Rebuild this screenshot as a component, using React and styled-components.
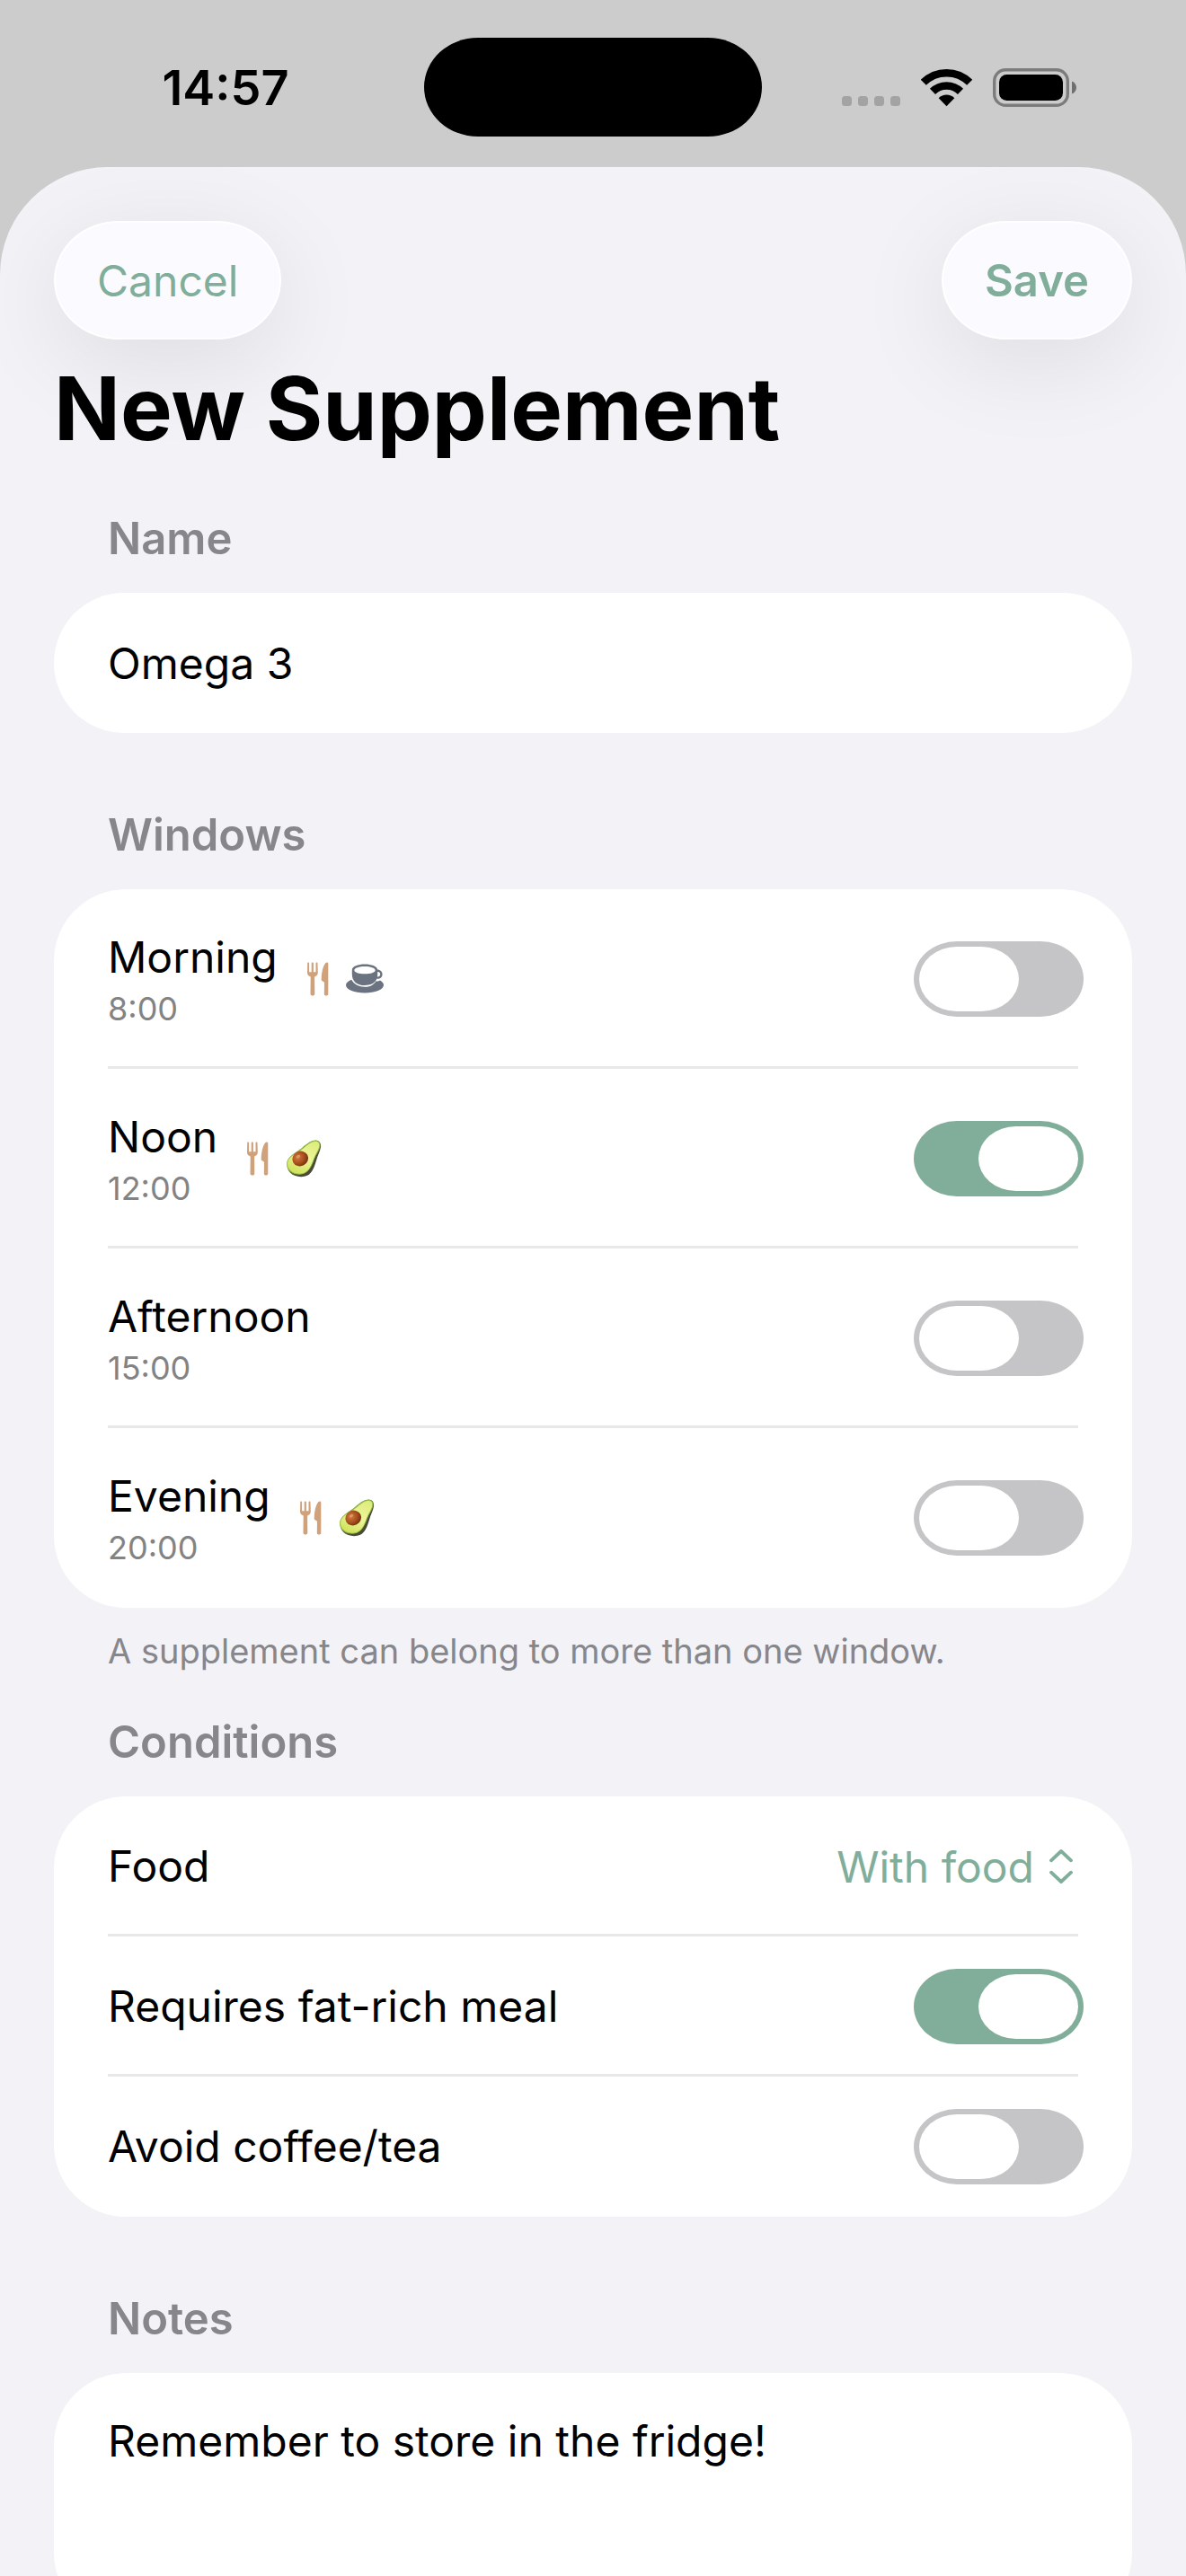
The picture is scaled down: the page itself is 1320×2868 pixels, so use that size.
import React, { useState } from "react";
import styled, { createGlobalStyle } from "styled-components";

const GlobalStyle = createGlobalStyle`
  * {
    box-sizing: border-box;
  }

  body {
    margin: 0;
    background: #cccccc;
    font-family: Inter, "Liberation Sans", sans-serif;
    color: #000000;
  }

  button, input, select, textarea {
    font: inherit;
    color: inherit;
  }
`;

const dayWindows = [
    { id: "morning", title: "Morning", time: "8:00", icons: ["cutlery", "coffee"] },
    { id: "noon", title: "Noon", time: "12:00", icons: ["cutlery", "avocado"] },
    { id: "afternoon", title: "Afternoon", time: "15:00", icons: [] },
    { id: "evening", title: "Evening", time: "20:00", icons: ["cutlery", "avocado"] },
];

const foodOptions = ["With food", "No food", "Any time"];

const Screen = styled.div`
  display: flex;
  flex-direction: column;
  height: 100vh;
  overflow: hidden;
`;

const StatusBar = styled.header`
  display: grid;
  grid-template-columns: 1fr 376px 1fr;
  align-items: center;
  flex-shrink: 0;
  height: 186px;
  padding-top: 8px;
`;

const Clock = styled.time`
  padding-left: 30px;
  font-size: 54px;
  font-weight: 600;
  text-align: center;
`;

const Island = styled.div`
  height: 110px;
  border-radius: 60px / 55px;
  background: #000000;
`;

const StatusIcons = styled.div`
  display: flex;
  align-items: center;
  justify-content: flex-end;
  gap: 23px;
  padding-right: 121px;
`;

const Sheet = styled.main`
  flex: 1;
  min-height: 0;
  padding: 60px 60px 0;
  border-radius: 120px 120px 0 0;
  background: #f2f2f7;
  overflow: hidden;
`;

const Toolbar = styled.div`
  display: flex;
  justify-content: space-between;
`;

const ToolbarButton = styled.button`
  height: 132px;
  padding: 0 46px;
  border: 2px solid #ffffff;
  border-radius: 72px / 66px;
  background: #fbfbff;
  box-shadow: 0 24px 108px rgba(0, 0, 0, 0.09);
  color: #81ae9a;
  font-size: ${({ $bold }) => ($bold ? 49 : 48)}px;
  font-weight: ${({ $bold }) => ($bold ? 600 : 400)};
  cursor: pointer;
`;

const Title = styled.h1`
  margin: 17px 0 0;
  font-size: 97px;
  font-weight: 700;
  line-height: 120px;
`;

const Section = styled.section`
  margin-top: ${({ $gap }) => $gap}px;
`;

const SectionTitle = styled.h2`
  margin: 0 60px 30px;
  color: #86868b;
  font-size: 49px;
  font-weight: 600;
  line-height: 60px;
`;

const Card = styled.div`
  padding: 0 60px;
  border-radius: 80px;
  background: #ffffff;
`;

const Row = styled.div`
  display: flex;
  align-items: center;
  height: ${({ $tall }) => ($tall ? 200 : 156)}px;
  font-size: 48px;
  /* the divider is painted inside the row so it does not shift the content */
  box-shadow: inset 0 -3px 0 #e8e8e8;

  &:last-child {
    box-shadow: none;
  }
`;

const RowLabel = styled.label`
  flex: 1;
  line-height: 60px;
`;

const WindowInfo = styled.div`
  flex: 1;
  display: flex;
  align-items: center;
  gap: 33px;
`;

const WindowLabel = styled.label`
  display: flex;
  flex-direction: column;
  gap: 6px;
  line-height: 60px;
`;

const WindowTime = styled.span`
  color: #838383;
  font-size: 36px;
  line-height: 42px;
`;

const IconGroup = styled.span`
  display: flex;
  align-items: center;
  gap: 19px;
`;

const Switch = styled.input`
  appearance: none;
  display: flex;
  flex-shrink: 0;
  justify-content: ${({ checked }) => (checked ? "flex-end" : "flex-start")};
  width: 189px;
  height: 84px;
  margin: 0 -6px 0 0;
  padding: 6px;
  border-radius: 48px / 42px;
  background: ${({ checked }) => (checked ? "#81ae9a" : "#c5c5c7")};
  cursor: pointer;

  &::before {
    content: "";
    width: 111px;
    height: 72px;
    border-radius: 42px / 36px;
    background: #ffffff;
  }
`;

const NameInput = styled.input`
  width: 100%;
  height: 156px;
  padding: 0;
  border: none;
  outline: none;
  background: transparent;
  font-size: 48px;
`;

const NotesInput = styled.textarea`
  display: block;
  width: 100%;
  height: 280px;
  padding: 46px 0;
  border: none;
  outline: none;
  resize: none;
  background: transparent;
  font-size: 48px;
  line-height: 60px;
`;

const SelectWrapper = styled.div`
  display: flex;
  align-items: center;
  gap: 17px;
  padding-right: 6px;
  color: #81ae9a;
`;

const FoodSelect = styled.select`
  appearance: none;
  padding: 0;
  border: none;
  outline: none;
  background: transparent;
  text-align: right;
  text-align-last: right;
  cursor: pointer;
`;

const Footnote = styled.p`
  margin: 24px 60px 0;
  color: #86868b;
  font-size: 38px;
  line-height: 48px;
`;

const SignalIcon = () => (
    <svg width="65" height="43" viewBox="0 0 65 43" fill="#a3a3a3">
        {[0, 18, 36, 54].map((x) => (
            <rect key={x} x={x} y="31" width="11" height="11" rx="3.5" />
        ))}
    </svg>
);

const WifiIcon = () => (
    <svg width="57" height="43" viewBox="0 0 57 43">
        <g fill="none" stroke="#000" strokeWidth="8.6">
            <path d="M2.8 15.8A36.4 36.4 0 0 1 54.2 15.8" />
            <path d="M13 25.9A22 22 0 0 1 44 25.9" />
        </g>
        <path d="M28.5 42.2L19.7 33.2A12.6 12.6 0 0 1 37.3 33.2Z" />
    </svg>
);

const BatteryIcon = () => (
    <svg width="94" height="43" viewBox="0 0 94 43">
        <rect x="1.7" y="1.7" width="81.6" height="39.6" rx="12.5" fill="none" stroke="#7c7c7c" strokeWidth="3.4" />
        <rect x="7" y="7" width="71" height="29" rx="8.5" />
        <path d="M88 14.5C91 15.5 93 18.2 93 21.5S91 27.5 88 28.5Z" fill="#6f6f6f" />
    </svg>
);

const CutleryIcon = () => (
    <svg width="24" height="38" viewBox="0 0 24 38" fill="#cfa27c">
        <path d="M1.2 0.6C1.9 0.6 2.1 1 2.1 1.7V11.2H4.7V1.6C4.7 0.9 5 0.6 5.8 0.6S6.9 0.9 6.9 1.6V11.2H9.5V1.7C9.5 1 9.8 0.6 10.5 0.6S11.5 1 11.5 1.7L11.8 12.2C11.8 14.4 10 15.6 8.1 16.6L8.3 35.6C8.3 37 7.2 37.6 5.9 37.6S3.5 37 3.5 35.6L3.7 16.6C1.8 15.6 0 14.4 0 12.2L0.2 1.7C0.2 1 0.5 0.6 1.2 0.6Z" />
        <path d="M21.8 0.6C22.8 0.6 23.3 1.2 23.3 2.2V35.6C23.3 37 22.4 37.6 21 37.6S18.8 37 18.8 35.6L19 22.8L16.5 21.1C15.8 20.6 15.6 20.1 15.7 19.3C15.8 12 17.6 4 20.3 1.2C20.8 0.8 21.3 0.6 21.8 0.6Z" />
    </svg>
);

const CoffeeIcon = () => (
    <svg width="42" height="38" viewBox="0 0 42 38" fill="#6b7280">
        <path d="M6.2 19.8C2.4 21.3 0 23.4 0 25.8C0 30.8 9.6 34.4 21 34.4S42 30.8 42 25.8C42 23.8 40.6 21.9 38 20.5C36.7 21.4 35 21.6 33.6 21.2C31 25.5 26.5 27.8 21 27.8C14.6 27.8 9 25 6.2 19.8Z" />
        <path
            fillRule="evenodd"
            d="M21 2.6C28.4 2.6 34.8 4.9 35.1 8.4C38 8.3 40.6 10.6 40.6 13.7C40.6 17 37.8 19.2 34.3 18.8C32.3 23.6 27.4 26 21 26C12.3 26 6.8 21.6 6.8 13.4V8.9C6.8 5 13.5 2.6 21 2.6ZM21 5.1C14.5 5.1 9.4 6.8 9.4 9.3S14.5 13.3 21 13.3S32.6 11.8 32.6 9.3S27.5 5.1 21 5.1ZM35.2 11.1V14C35.2 14.9 35.1 15.6 34.9 16.5C36.8 16.6 38.2 15.6 38.2 13.7C38.2 12.1 37 11 35.2 11.1Z"
        />
    </svg>
);

const AvocadoIcon = () => (
    <svg width="40" height="42" viewBox="0 0 40 42">
        <defs>
            <linearGradient id="skin" x1="0" y1="0" x2="1" y2="1">
                <stop offset="0.35" stopColor="#7fa83a" />
                <stop offset="0.65" stopColor="#4a4a38" />
            </linearGradient>
            <linearGradient id="flesh" x1="0.8" y1="0" x2="0.3" y2="1">
                <stop offset="0" stopColor="#dcec7c" />
                <stop offset="0.5" stopColor="#eef598" />
                <stop offset="1" stopColor="#cfe25c" />
            </linearGradient>
            <radialGradient id="pit" cx="0.4" cy="0.35" r="0.7">
                <stop offset="0" stopColor="#d37a42" />
                <stop offset="0.55" stopColor="#a9521f" />
                <stop offset="1" stopColor="#6e2c0e" />
            </radialGradient>
        </defs>
        <path d="M33.6 0.6C37.4 0.8 39.6 3.8 39 8.2C38.2 13.2 35.6 17.4 34.2 22.4C32 30.2 29.4 37 24 39.8C18.4 42.4 9.5 41.2 5 36.8C1.4 33.2 0 27 2.6 22C6 16.4 12 13.6 17.4 9.4C22.6 5.2 27.6 0.4 33.6 0.6Z" fill="url(#skin)" />
        <path d="M33.6 1.4C37.2 1.5 38.6 4.8 37.4 8.6C36 13.2 33.4 16.2 31.4 21.4C28.8 28.4 26.4 34.4 20.4 37.2C14.4 39.4 7.2 37.6 3.8 33.2C0.8 28.8 0.8 25 3.6 21C7 16.4 13 14.2 18.2 10.2C23.4 6.2 28 1.2 33.6 1.4Z" fill="url(#flesh)" stroke="#9cc247" strokeWidth="1" />
        <ellipse cx="16.2" cy="21" rx="9" ry="8.2" transform="rotate(-28 16.2 21)" fill="url(#pit)" />
        <ellipse cx="14" cy="18.6" rx="2.4" ry="1.6" transform="rotate(-30 14 18.6)" fill="#e8a777" opacity="0.7" />
    </svg>
);

const ChevronsIcon = () => (
    <svg width="26" height="38" viewBox="0 0 26 38" fill="none" stroke="#81ae9a" strokeWidth="3.8" strokeLinecap="round" strokeLinejoin="round">
        <path d="M2 12.3L13 2L24 12.3" />
        <path d="M2 25.7L13 36L24 25.7" />
    </svg>
);

const icons = {
    cutlery: CutleryIcon,
    coffee: CoffeeIcon,
    avocado: AvocadoIcon,
};

const App = () => {
    const [name, setName] = useState("Omega 3");
    const [selected, setSelected] = useState({ noon: true });
    const [food, setFood] = useState(foodOptions[0]);
    const [fatRich, setFatRich] = useState(true);
    const [avoidCoffee, setAvoidCoffee] = useState(false);
    const [notes, setNotes] = useState("Remember to store in the fridge!");

    const toggleWindow = (id) => {
        setSelected({ ...selected, [id]: !selected[id] });
    };

    return (
        <Screen>
            <GlobalStyle />
            <StatusBar>
                <Clock>14:57</Clock>
                <Island />
                <StatusIcons>
                    <SignalIcon />
                    <WifiIcon />
                    <BatteryIcon />
                </StatusIcons>
            </StatusBar>
            <Sheet>
                <Toolbar>
                    <ToolbarButton type="button">Cancel</ToolbarButton>
                    <ToolbarButton type="button" $bold>Save</ToolbarButton>
                </Toolbar>
                <Title>New Supplement</Title>

                <Section $gap={55}>
                    <SectionTitle>
                        <label htmlFor="name">Name</label>
                    </SectionTitle>
                    <Card>
                        <NameInput id="name" type="text" value={name} onChange={(e) => setName(e.target.value)} />
                    </Card>
                </Section>

                <Section $gap={84}>
                    <SectionTitle>Windows</SectionTitle>
                    <Card>
                        {dayWindows.map((item) => (
                            <Row key={item.id} $tall>
                                <WindowInfo>
                                    <WindowLabel htmlFor={item.id}>
                                        {item.title}
                                        <WindowTime>{item.time}</WindowTime>
                                    </WindowLabel>
                                    <IconGroup>
                                        {item.icons.map((icon) => {
                                            const Icon = icons[icon];
                                            return <Icon key={icon} />;
                                        })}
                                    </IconGroup>
                                </WindowInfo>
                                <Switch
                                    id={item.id}
                                    type="checkbox"
                                    checked={!!selected[item.id]}
                                    onChange={() => toggleWindow(item.id)}
                                />
                            </Row>
                        ))}
                    </Card>
                    <Footnote>A supplement can belong to more than one window.</Footnote>
                </Section>

                <Section $gap={48}>
                    <SectionTitle>Conditions</SectionTitle>
                    <Card>
                        <Row>
                            <RowLabel htmlFor="food">Food</RowLabel>
                            <SelectWrapper>
                                <FoodSelect id="food" value={food} onChange={(e) => setFood(e.target.value)}>
                                    {foodOptions.map((option) => (
                                        <option key={option}>{option}</option>
                                    ))}
                                </FoodSelect>
                                <ChevronsIcon />
                            </SelectWrapper>
                        </Row>
                        <Row>
                            <RowLabel htmlFor="fat-rich">Requires fat-rich meal</RowLabel>
                            <Switch id="fat-rich" type="checkbox" checked={fatRich} onChange={() => setFatRich(!fatRich)} />
                        </Row>
                        <Row>
                            <RowLabel htmlFor="avoid-coffee">Avoid coffee/tea</RowLabel>
                            <Switch
                                id="avoid-coffee"
                                type="checkbox"
                                checked={avoidCoffee}
                                onChange={() => setAvoidCoffee(!avoidCoffee)}
                            />
                        </Row>
                    </Card>
                </Section>

                <Section $gap={84}>
                    <SectionTitle>
                        <label htmlFor="notes">Notes</label>
                    </SectionTitle>
                    <Card>
                        <NotesInput id="notes" value={notes} onChange={(e) => setNotes(e.target.value)} />
                    </Card>
                </Section>
            </Sheet>
        </Screen>
    );
};

export default App;
